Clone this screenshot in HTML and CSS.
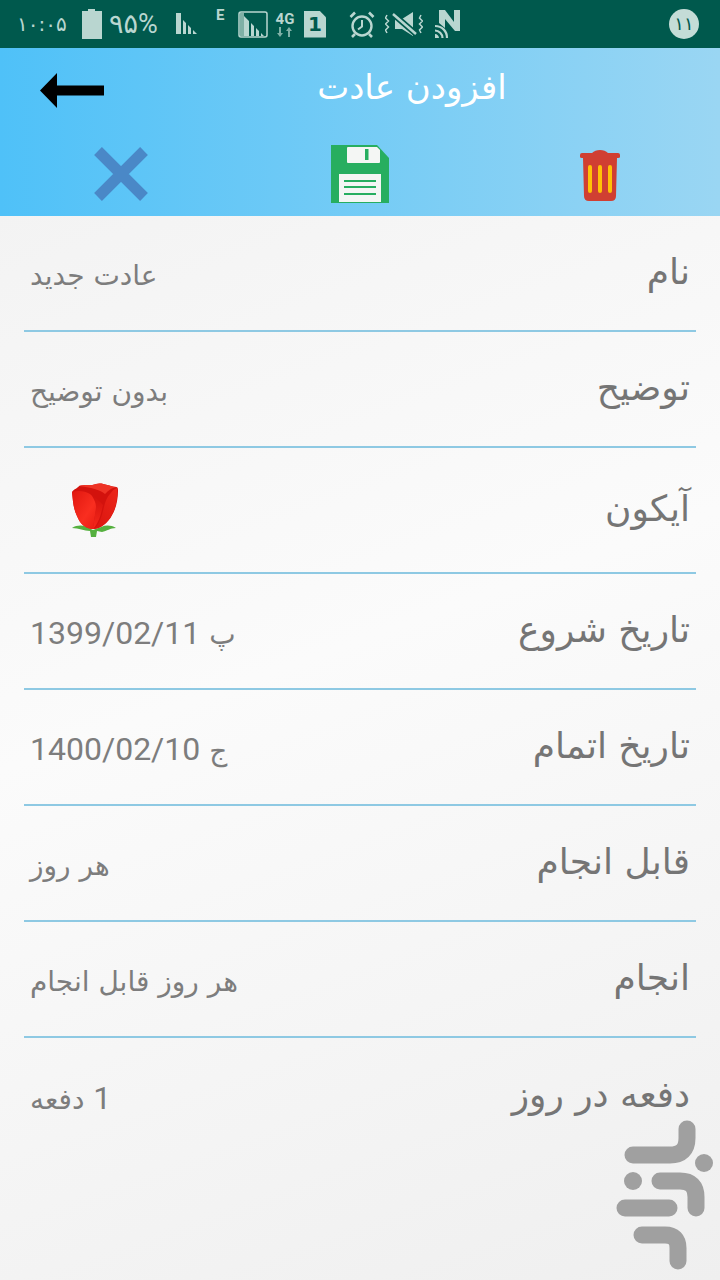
FILE: index.html
```html
<!DOCTYPE html>
<html lang="fa">
<head>
    <meta charset="UTF-8">
    <title>افزودن عادت</title>
    <link rel="stylesheet" href="styles.css">
</head>
<body>

    <div class="status-bar">
        <span class="status-time">۱۰:۰۵</span>
        <svg class="st-battery" width="20" height="30" viewBox="0 0 20 30"><path d="M6 0h7v2h7v28H0V2h6z" fill="#b9d6d0"/></svg>
        <span class="status-percent">۹۵%</span>
        <svg class="st-signal" width="22" height="22" viewBox="0 0 22 22"><path d="M0 0h5v21H0zM7 7l3 3v11H7zM12 12l3 3v6h-3zM17 17l4 4h-4z" fill="#b9d6d0"/></svg>
        <span class="status-e">E</span>
        <svg class="st-boxed" width="30" height="27" viewBox="0 0 30 27"><rect x="1" y="1" width="28" height="25" rx="2" fill="none" stroke="#b9d6d0" stroke-width="1.5"/><path d="M2 2h4v23H2z" fill="#7fb0a6"/><path d="M6 5l5 5v15H6zM13 12l3 3v10h-3zM18 17l3 3v5h-3zM23 22l3 3h-3z" fill="#b9d6d0"/></svg>
        <div class="st-net">
            <span>4G</span>
            <svg width="16" height="10" viewBox="0 0 16 10"><path d="M3 10 0 6h2V0h2v6h2zM12 0l3 4h-2v6h-2V4H9z" fill="#7fb0a6"/></svg>
        </div>
        <div class="st-sim">1</div>
        <svg class="st-alarm" width="26" height="27" viewBox="0 0 26 27" fill="none" stroke="#b9d6d0"><circle cx="13" cy="15" r="9.5" stroke-width="2.4"/><path d="M13 9v6.500l-4 3" stroke-width="2"/><path d="M1.500 6 6 1.500M24.500 6 20 1.500M6 23l-3 3M20 23l3 3" stroke-width="2.600"/></svg>
        <svg class="st-mute" width="38" height="26" viewBox="0 0 38 26"><path d="M10 8h7l11-7v24l-11-7h-7z" fill="#b9d6d0"/><path d="M8 3l23 20" stroke="#00594d" stroke-width="6"/><path d="M8 3l23 20" stroke="#b9d6d0" stroke-width="2.500"/><path d="M2 4l-1.500 3 3 3-3 3 3 3-3 3 1.500 3M36 4l-1.500 3 3 3-3 3 3 3-3 3 1.500 3" fill="none" stroke="#b9d6d0" stroke-width="1.500"/></svg>
        <svg class="st-nfc" width="25" height="28" viewBox="0 0 25 28"><path d="M4 0h6l9 12V0h6v21h-5L10 9v9l-6-5z" fill="#b9d6d0"/><path d="M0 16c7 0 12 5 12 12M0 20.500c4 0 7.500 3.500 7.500 7.500" fill="none" stroke="#b9d6d0" stroke-width="2.200"/><path d="M0 24c2 0 4 2 4 4H0z" fill="#b9d6d0"/></svg>
        <div class="status-badge">۱۱</div>
    </div>

    <div class="header">
        <div class="header-top">
            <svg class="back-arrow" width="64" height="35" viewBox="0 0 64 35"><path d="M0 17.500 17 0v12.500h47v10H17V35z" fill="#000"/></svg>
            <div class="title">افزودن عادت</div>
        </div>
        <div class="header-actions">
            <svg class="icon-close" width="54" height="54" viewBox="0 0 54 54"><path d="M4 4l46 46M50 4 4 50" stroke="#4a88c7" stroke-width="11"/></svg>
            <svg width="58" height="58" viewBox="0 0 58 58">
                <path d="M0 0h46l12 13v45H0z" fill="#27ae60"/>
                <path d="M17 2h29l3 3v12q0 1-1 1H17q-1 0-1-1V3q0-1 1-1z" fill="#f4f6f4"/>
                <rect x="34" y="4" width="3.500" height="11" fill="#27ae60"/>
                <rect x="8" y="29" width="42" height="28" fill="#f4f6f4"/>
                <path d="M13 36h32M13 42h32M13 49h32" stroke="#27ae60" stroke-width="2"/>
            </svg>
            <svg class="icon-trash" width="40" height="51" viewBox="0 0 40 51">
                <path d="M2 3h10q3-3 8-3t8 3h10q2 0 2 2v2q0 1-2 1h-1l-1 38q0 5-5 5H9q-5 0-5-5L3 8H2Q0 8 0 7V5q0-2 2-2z" fill="#d03f32"/>
                <path d="M10 17v24M20 17v24M30 17v24" stroke="#ffc107" stroke-width="4" stroke-linecap="round"/>
            </svg>
        </div>
    </div>

    <div class="form">
        <div class="row"><div class="label">نام</div><div class="value">عادت جدید</div></div>
        <div class="row"><div class="label">توضیح</div><div class="value">بدون توضیح</div></div>
        <div class="row row-icon">
            <div class="label">آیکون</div>
            <svg class="rose" width="48" height="56" viewBox="0 0 48 56">
                <defs>
                    <linearGradient id="petal-left" x1="0" y1="0" x2="1" y2="1"><stop offset="0" stop-color="#e0170f"/><stop offset="0.6" stop-color="#f92e20"/><stop offset="1" stop-color="#e81c12"/></linearGradient>
                    <linearGradient id="petal-right" x1="1" y1="0" x2="0" y2="1"><stop offset="0" stop-color="#ec261a"/><stop offset="1" stop-color="#d9140e"/></linearGradient>
                    <linearGradient id="petal-mid" x1="0" y1="0" x2="0" y2="1"><stop offset="0" stop-color="#d3120d"/><stop offset="1" stop-color="#f6281b"/></linearGradient>
                </defs>
                <path d="M2 46c5-3 10-3 15-1l6 3 8-3c5-2 10-2 15 1-6 0-9 3-14 4l-5-1-1 6h-5l-1-6c-6 0-11-3-18-3z" fill="#55b03f"/>
                <path d="M2 10C4 7 8 6 9 4c5-2 13 0 17-2 6-2 12 2 20 3 2 0 2 2 2 4 0 8-2 18-6 24-4 8-12 14-19 14S10 42 7 34C3 26 3 18 2 10z" fill="#d3120d"/>
                <path d="M9 4c5-2 13 0 17-2 6-2 12 2 21 3-6 1-9 4-12 7-5-4-12-6-26-8z" fill="#ee3325"/>
                <path d="M2 10c6-2 13-1 18 2 4 3 6 7 7 12-2 8-3 16-4 23-7 0-13-5-16-13C3 26 3 18 2 10z" fill="url(#petal-left)"/>
                <path d="M47 6c1 9-1 20-5 27-4 8-12 14-19 14 7-4 9-14 11-22 1-5 3-10 6-13 2-3 4-5 7-6z" fill="url(#petal-right)"/>
                <path d="M22 14c5 2 8 6 11 9-2 9-4 18-10 24 1-8 2-15 3-22 0-4-2-8-4-11z" fill="url(#petal-mid)"/>
            </svg>
        </div>
        <div class="row"><div class="label">تاریخ شروع</div><div class="value">پ <span class="num">1399/02/11</span></div></div>
        <div class="row"><div class="label">تاریخ اتمام</div><div class="value">ج <span class="num">1400/02/10</span></div></div>
        <div class="row"><div class="label">قابل انجام</div><div class="value">هر روز</div></div>
        <div class="row"><div class="label">انجام</div><div class="value">هر روز قابل انجام</div></div>
        <div class="row row-last"><div class="label">دفعه در روز</div><div class="value"><span class="num">1</span> دفعه</div></div>
    </div>

    <svg class="watermark" width="120" height="180" viewBox="600 1100 120 180" fill="none" stroke="#a0a0a0" stroke-width="17" stroke-linecap="round">
        <path d="M633 1155h37q17 0 17-17v-9"/>
        <path d="M660 1181h20q16 0 16 16v11"/>
        <path d="M625 1208h44"/>
        <path d="M642 1235h23q13 0 13 13v13"/>
        <circle cx="704" cy="1163" r="9" fill="#a0a0a0" stroke="none"/>
        <circle cx="633" cy="1181" r="9" fill="#a0a0a0" stroke="none"/>
    </svg>

</body>
</html>
```
FILE: styles.css
```css
html, body {
    margin: 0;
    padding: 0;
}

body {
    width: 720px;
    height: 1280px;
    overflow: hidden;
    position: relative;
    font-family: "DejaVu Sans", sans-serif;
    background: linear-gradient(160deg, #f0f0f0 0%, #fbfbfb 50%, #efefef 100%);
}

.status-bar {
    height: 48px;
    background-color: #00594d;
    color: #b9d6d0;
    display: flex;
    align-items: center;
    padding-left: 17px;
    box-sizing: border-box;
}

.status-time {
    font-size: 20px;
    width: 49px;
    direction: ltr;
}

.status-percent {
    font-family: Roboto, "DejaVu Sans", sans-serif;
    font-size: 27px;
    width: 51px;
    margin-left: 7px;
}

.st-battery {
    margin-left: 16px;
}

.st-signal {
    margin-left: 16px;
}

.status-e {
    font-family: Roboto, sans-serif;
    font-size: 15px;
    font-weight: bold;
    margin-left: 18px;
    margin-bottom: 18px;
    width: 9px;
}

.st-boxed {
    margin-left: 13px;
}

.st-net {
    width: 22px;
    margin-left: 6px;
    display: flex;
    flex-direction: column;
    align-items: center;
    font-family: Roboto, sans-serif;
    font-size: 15px;
    font-weight: bold;
    line-height: 15px;
}

.st-net svg {
    display: block;
}

.st-sim {
    width: 22px;
    height: 27px;
    margin-left: 8px;
    background-color: #b9d6d0;
    color: #00594d;
    font-size: 20px;
    font-weight: bold;
    line-height: 27px;
    text-align: center;
    clip-path: polygon(0 0, 70% 0, 100% 25%, 100% 100%, 0 100%);
}

.st-alarm {
    margin-left: 23px;
}

.st-mute {
    margin-left: 10px;
}

.st-nfc {
    margin-left: 12px;
}

.status-badge {
    width: 30px;
    height: 30px;
    margin-left: auto;
    margin-right: 21px;
    border-radius: 50%;
    background-color: #c4dcd7;
    color: #00594d;
    font-size: 18px;
    line-height: 30px;
    text-align: center;
}

.header {
    height: 168px;
    background: linear-gradient(90deg, #4fc1f8 0%, #9ad6f3 100%);
}

.header-top {
    height: 84px;
    display: flex;
    align-items: center;
    padding-left: 40px;
}

.back-arrow {
    flex: none;
}

.title {
    flex: 1;
    text-align: center;
    color: #fff;
    font-size: 34px;
    margin-bottom: 6px;
}

.header-actions {
    display: grid;
    grid-template-columns: repeat(3, 240px);
    justify-items: center;
    align-items: center;
    height: 62px;
    margin-top: 11px;
}

.icon-close {
    margin-left: 2px;
}

.icon-trash {
    margin-top: 3px;
}

.form {
    margin: 0 24px;
}

.row {
    height: 116px;
    box-sizing: border-box;
    border-bottom: 2px solid #8ec9e3;
    display: flex;
    flex-direction: row-reverse;
    justify-content: space-between;
    align-items: center;
    padding: 0 6px;
}

.row-icon {
    height: 126px;
}

.row-last {
    border-bottom: none;
}

.label {
    direction: rtl;
    font-size: 36px;
    color: #757575;
    margin-bottom: 4px;
}

.value {
    direction: rtl;
    font-size: 28px;
    color: #7d7d7d;
    margin-top: 4px;
}

.num {
    font-family: Roboto, sans-serif;
    font-size: 32px;
}

.rose {
    margin-left: 40px;
}

.watermark {
    position: absolute;
    left: 600px;
    top: 1100px;
}
```
